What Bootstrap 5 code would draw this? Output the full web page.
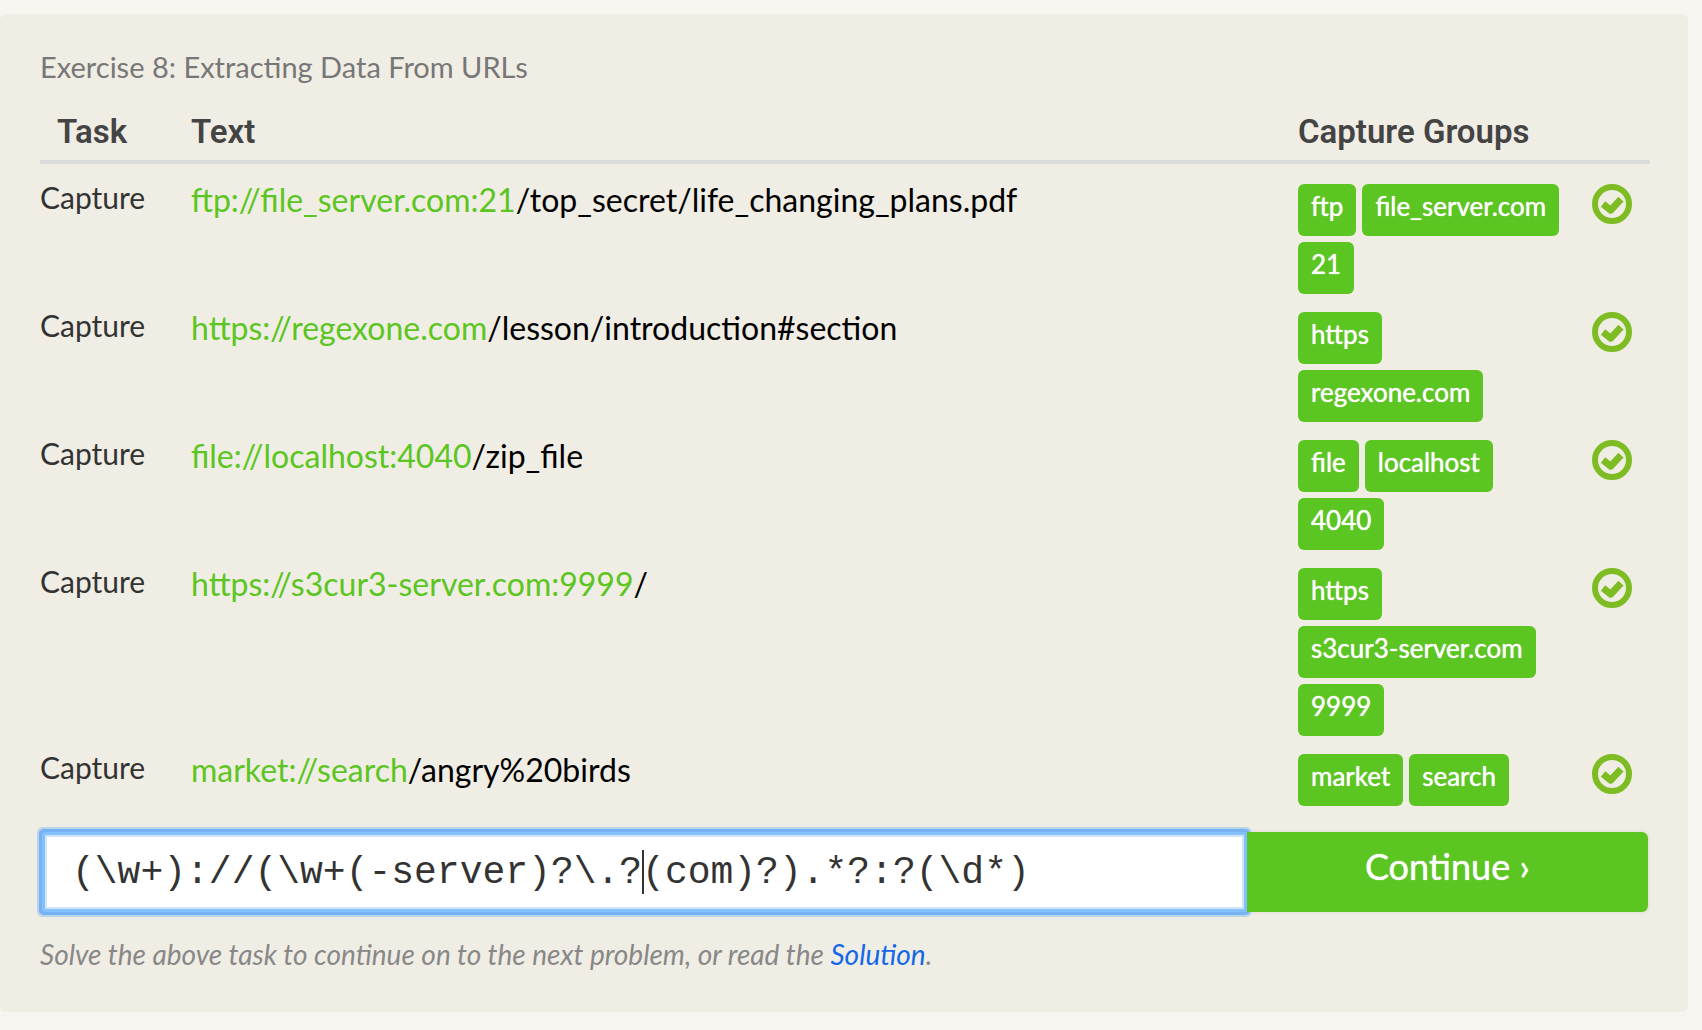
<!DOCTYPE html>
<html lang="en">
<head>
<meta charset="utf-8">
<meta name="viewport" content="width=device-width, initial-scale=1">
<title>Exercise 8: Extracting Data From URLs</title>
<link rel="stylesheet" href="https://cdn.jsdelivr.net/npm/bootstrap@5.3.0/dist/css/bootstrap.min.css">
<style>
  :root { --green: #5bc521; }
  body { background: #f6f5f0; font-family: Lato, "Open Sans", sans-serif; }
  .exercise { margin: 14px 14px 18px 0; padding: 33px 38px 38px 40px; background: #f0ede4; border-radius: 6px; }
  .exercise-title { font-size: 29px; line-height: 40px; color: #777; margin-bottom: 25px; }
  .task-table { table-layout: fixed; width: 100%; }
  .task-table th { font-family: Roboto, sans-serif; font-size: 33px; font-weight: 600; line-height: 40px; color: #444; padding: 0 0 8px; border-bottom: 4px solid #dbdcdb; }
  .task-table tbody::before { content: ""; display: table-row; height: 10px; }
  .task-table td { padding: 0; vertical-align: top; line-height: 40px; }
  .col-task { width: 151px; }
  .col-groups { width: 294px; }
  .col-state { width: 58px; }
  .task-table th.task-head { padding-right: 47px; }
  .task-table td.task-name { padding-top: 5px; font-size: 30px; color: #333; }
  .task-table td.task-text { padding-top: 8px; font-size: 32px; color: #000; }
  .task-table td.task-groups { padding: 12px 22px 6px 0; }
  .task-table td.task-state { padding-top: 12px; }
  .matched { color: var(--green); }
  .capture { background: var(--green); color: #fff; font-size: 26px; text-shadow: 0 0 1px #fff; line-height: 40px; padding: 2px 13px 10px; border-radius: 6px; }
  .capture-list { gap: 6px; }
  .answer { margin: 20px 2px 22px; border-radius: 6px; box-shadow: 0 0 0 2px #e9e6de; }
  .answer-field { flex: 0 0 75%; z-index: 0; }
  .answer-input { height: 80px; padding: 0 27px; border: 3px solid #85c0fe; border-radius: 2px; box-shadow: inset 0 0 0 2px #cfe6ff, 0 0 0 3px #77b3f1, 0 0 0 5px #b9d3e9; background: #fff; color: #333; font: 38px "Liberation Mono", monospace; }
  .caret { left: calc(30px + 25ch); top: 18px; width: 2px; height: 44px; background: #333; }
  .caret-layer { font: 38px "Liberation Mono", monospace; pointer-events: none; }
  .continue { z-index: 1; background: var(--green); color: #fff; font-size: 36px; text-shadow: 0 0 1px #fff; line-height: 40px; border: 0; border-radius: 0 6px 6px 0; padding: 14px 0 26px; }
  .hint { font-size: 28px; line-height: 40px; color: #888; }
  .hint a { color: #1368e8; }
</style>
</head>
<body>
<main class="exercise">
  <h1 class="exercise-title fw-normal mt-0">Exercise 8: Extracting Data From URLs</h1>
  <svg class="d-none">
    <symbol id="tick" viewBox="0 0 40 40">
      <circle cx="20" cy="20" r="17" fill="none" stroke="#7dbd23" stroke-width="6"/>
      <path d="M11 20 L18.8 26.2 L29 15.2" fill="none" stroke="#7dbd23" stroke-width="7" stroke-linejoin="round"/>
    </symbol>
  </svg>
  <table class="task-table">
    <colgroup><col class="col-task"><col><col class="col-groups"><col class="col-state"></colgroup>
    <thead>
      <tr><th class="task-head text-center" scope="col">Task</th><th scope="col">Text</th><th scope="col" colspan="2">Capture Groups</th></tr>
    </thead>
    <tbody>
      <tr>
        <td class="task-name">Capture</td>
        <td class="task-text"><span class="matched">ftp://file_server.com:21</span>/top_secret/life_changing_plans.pdf</td>
        <td class="task-groups"><div class="capture-list d-flex flex-wrap"><span class="capture">ftp</span><span class="capture">file_server.com</span><span class="capture">21</span></div></td>
        <td class="task-state"><svg class="d-block" width="40" height="40" role="img" aria-label="Passed"><use href="#tick"/></svg></td>
      </tr>
      <tr>
        <td class="task-name">Capture</td>
        <td class="task-text"><span class="matched">https://regexone.com</span>/lesson/introduction#section</td>
        <td class="task-groups"><div class="capture-list d-flex flex-wrap"><span class="capture">https</span><span class="capture">regexone.com</span></div></td>
        <td class="task-state"><svg class="d-block" width="40" height="40" role="img" aria-label="Passed"><use href="#tick"/></svg></td>
      </tr>
      <tr>
        <td class="task-name">Capture</td>
        <td class="task-text"><span class="matched">file://localhost:4040</span>/zip_file</td>
        <td class="task-groups"><div class="capture-list d-flex flex-wrap"><span class="capture">file</span><span class="capture">localhost</span><span class="capture">4040</span></div></td>
        <td class="task-state"><svg class="d-block" width="40" height="40" role="img" aria-label="Passed"><use href="#tick"/></svg></td>
      </tr>
      <tr>
        <td class="task-name">Capture</td>
        <td class="task-text"><span class="matched">https://s3cur3-server.com:9999</span>/</td>
        <td class="task-groups"><div class="capture-list d-flex flex-wrap"><span class="capture">https</span><span class="capture">s3cur3-server.com</span><span class="capture">9999</span></div></td>
        <td class="task-state"><svg class="d-block" width="40" height="40" role="img" aria-label="Passed"><use href="#tick"/></svg></td>
      </tr>
      <tr>
        <td class="task-name">Capture</td>
        <td class="task-text"><span class="matched">market://search</span>/angry%20birds</td>
        <td class="task-groups"><div class="capture-list d-flex flex-wrap"><span class="capture">market</span><span class="capture">search</span></div></td>
        <td class="task-state"><svg class="d-block" width="40" height="40" role="img" aria-label="Passed"><use href="#tick"/></svg></td>
      </tr>
    </tbody>
  </table>
  <form class="answer d-flex">
    <div class="answer-field position-relative">
      <input class="answer-input d-block w-100" type="text" aria-label="Regular expression" spellcheck="false" autocomplete="off" value="(\w+)://(\w+(-server)?\.?(com)?).*?:?(\d*)">
      <div class="caret-layer position-absolute top-0 start-0"><span class="caret position-absolute"></span></div>
    </div>
    <button class="continue position-relative flex-fill" type="button">Continue ›</button>
  </form>
  <p class="hint fst-italic mb-0">Solve the above task to continue on to the next problem, or read the <a class="text-decoration-none" href="#solution">Solution</a>.</p>
</main>
<script src="https://cdn.jsdelivr.net/npm/bootstrap@5.3.0/dist/js/bootstrap.bundle.min.js"></script>
</body>
</html>
